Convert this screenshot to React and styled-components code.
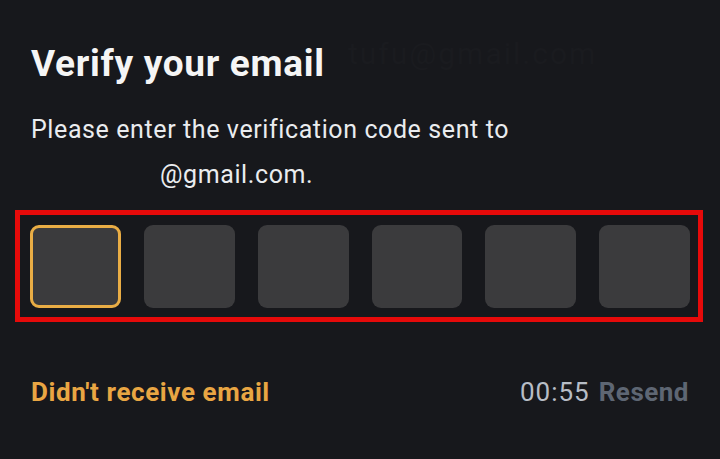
import React from 'react'
import styled, { createGlobalStyle } from 'styled-components'

const Global = createGlobalStyle`
  html, body {
    margin: 0;
    padding: 0;
    background: #17181c;
  }
  body {
    font-family: Roboto, "Liberation Sans", sans-serif;
    width: 720px;
    height: 459px;
    overflow: hidden;
  }
`

const Screen = styled.div`
  position: relative;
  width: 720px;
  height: 459px;
  background: #17181c;
  color: #eaecef;
  padding-top: 40px;
  box-sizing: border-box;
`

// faint ghost text behind the title
const Watermark = styled.div`
  position: absolute;
  left: 348px;
  top: 36px;
  font-size: 30px;
  color: #1a1b1f;
  letter-spacing: 2px;
  pointer-events: none;
`

const Head = styled.div`
  position: relative;
  padding-left: 31px;
`

const Title = styled.h1`
  margin: 0;
  font-size: 37px;
  font-weight: 700;
  line-height: 48px;
  color: #f5f5f5;
  letter-spacing: 0.7px;
`

const Lines = styled.div`
  margin-top: 19px;
`

const Text = styled.p`
  margin: 0;
  font-size: 25px;
  line-height: 45px;
  color: #eaecef;
  padding-left: ${p => p.$indent || 0}px;
  letter-spacing: 0.6px;
`

const Highlight = styled.div`
  margin: 13px 0 0 15px;
  width: 688px;
  height: 112px;
  box-sizing: border-box;
  border: 5px solid #e60a0a;
  padding: 10px 8px 9px 10px;
`

const CodeRow = styled.div`
  display: flex;
  gap: 23px;
`

const Cell = styled.div`
  width: 91px;
  height: 83px;
  box-sizing: border-box;
  border-radius: 9px;
  background: #3b3b3d;
  border: ${p => (p.$active ? '3px solid #e9ad45' : 'none')};
`

const Footer = styled.div`
  display: flex;
  justify-content: space-between;
  align-items: center;
  padding: 0 31px;
  margin-top: 54px;
  font-size: 26px;
  line-height: 32px;
`

const Link = styled.span`
  color: #e9a643;
  font-weight: 700;
  letter-spacing: 0.6px;
`

const Timer = styled.span`
  color: #b7bdc6;
  letter-spacing: 1px;
`

const Resend = styled.span`
  color: #5e6673;
  font-weight: 700;
  margin-left: 9px;
  letter-spacing: 0.5px;
`

export default function App() {
  return (
    <>
      <Global />
      <Screen>
        <Watermark>tufu@gmail.com</Watermark>
        <Head>
          <Title>Verify your email</Title>
          <Lines>
            <Text>Please enter the verification code sent to</Text>
            <Text $indent={129}>@gmail.com.</Text>
          </Lines>
        </Head>
        <Highlight>
          <CodeRow>
            {[0, 1, 2, 3, 4, 5].map(i => (
              <Cell key={i} $active={i === 0} />
            ))}
          </CodeRow>
        </Highlight>
        <Footer>
          <Link>Didn't receive email</Link>
          <span>
            <Timer>00:55</Timer>
            <Resend>Resend</Resend>
          </span>
        </Footer>
      </Screen>
    </>
  )
}
